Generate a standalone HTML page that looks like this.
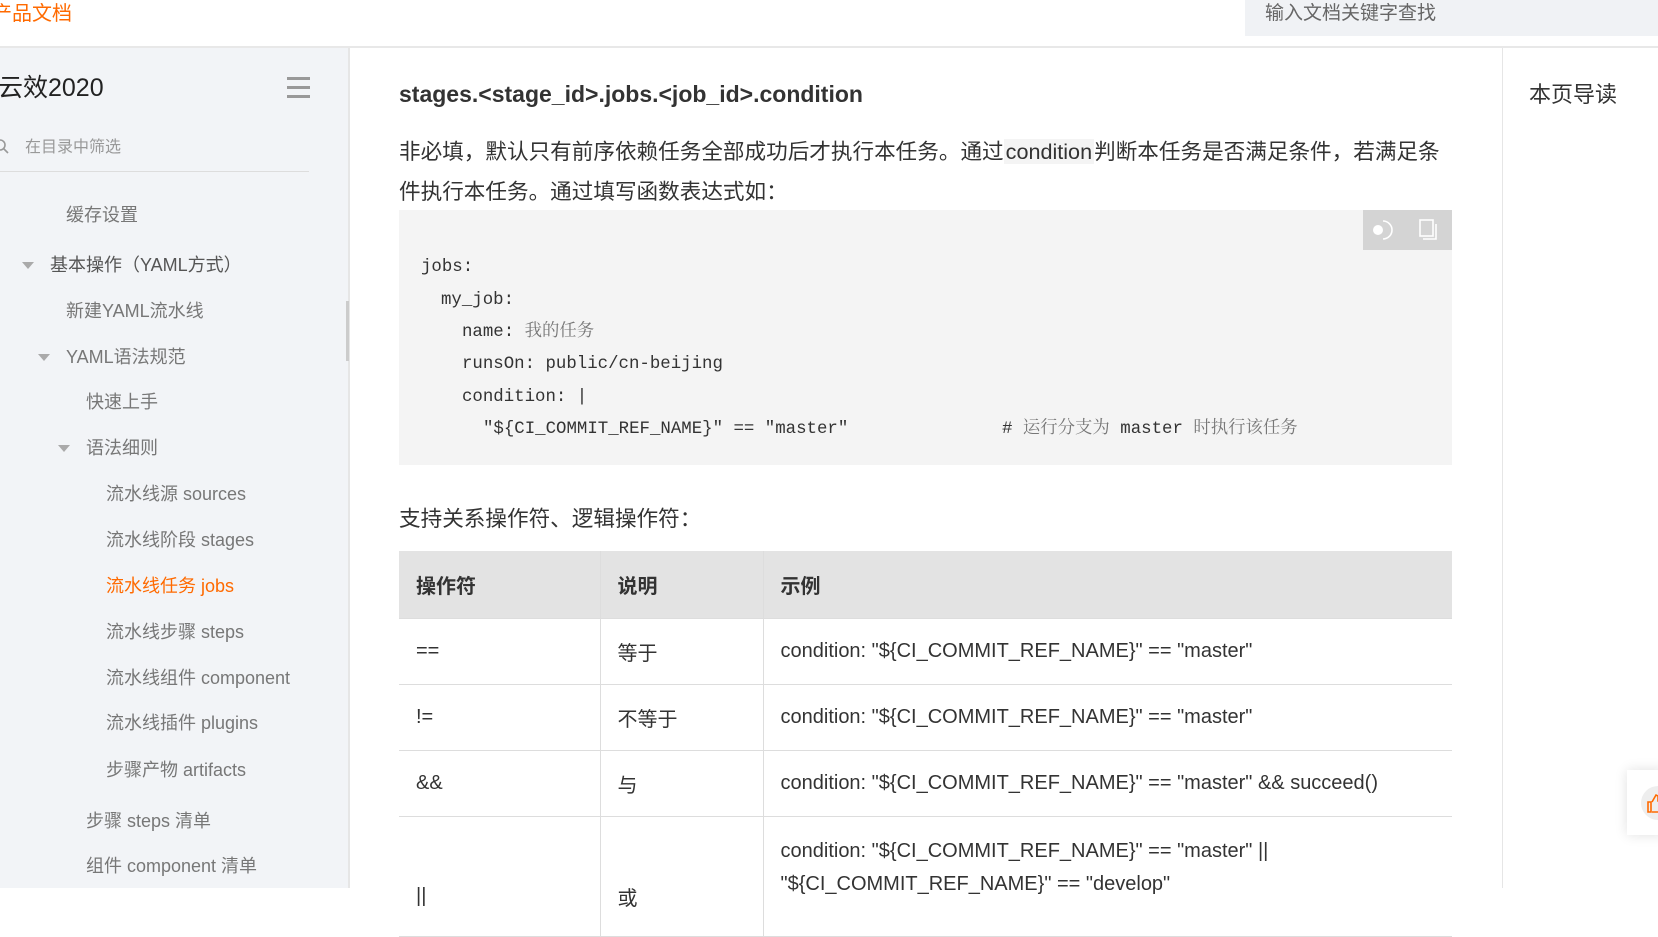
<!DOCTYPE html>
<html><head><meta charset="utf-8"><style>
*{margin:0;padding:0;box-sizing:border-box}
body{width:1658px;height:888px;overflow:hidden;background:#fff;position:relative;font-family:"Liberation Sans","Noto Sans CJK SC",sans-serif;color:#333}
.a{position:absolute;white-space:nowrap}
#side{position:absolute;left:0;top:48px;width:350px;height:840px;background:#f2f4f7;border-right:2px solid #e6e6e6}
.si{position:absolute;font-size:18px;color:#777;line-height:24px;white-space:nowrap}
.tri{position:absolute;width:0;height:0;border-left:6px solid transparent;border-right:6px solid transparent;border-top:7px solid #aaa}
.code{position:absolute;left:399px;top:210px;width:1053px;height:255px;background:#f4f4f4}
.cl{position:absolute;font-family:"Liberation Mono","Noto Serif CJK SC",monospace;font-size:17.4px;color:#333;white-space:pre;line-height:24px}
table{position:absolute;left:399px;top:551px;width:1053px;border-collapse:collapse;font-size:20px}
td,th{border-bottom:1px solid #ddd;text-align:left;padding-left:17px;vertical-align:middle}
th{background:#e3e3e3;height:67px;font-weight:bold}
td{height:66px}
td+td,th+th{border-left:1px solid #ddd}
</style></head><body>
<div class="a" style="left:-8px;top:-3px;font-size:20px;color:#ff6a00">产品文档</div>
<div class="a" style="left:1245px;top:0;width:413px;height:36px;background:#f0f2f5"></div>
<div class="a" style="left:1265px;top:-2px;font-size:19px;color:#666">输入文档关键字查找</div>
<div class="a" style="left:0;top:46px;width:1658px;height:2px;background:#e8e8e8"></div>

<div id="side">
<div class="si" style="left:-2px;top:24px;font-size:25px;color:#222;line-height:32px">云效2020</div>
<div style="position:absolute;left:287px;top:29px;width:23px;height:3px;background:#999"></div>
<div style="position:absolute;left:287px;top:38px;width:23px;height:3px;background:#999"></div>
<div style="position:absolute;left:287px;top:47px;width:23px;height:3px;background:#999"></div>
<svg style="position:absolute;left:-6px;top:91px" width="16" height="16"><circle cx="6" cy="6" r="5" fill="none" stroke="#999" stroke-width="1.6"/><line x1="10" y1="10" x2="14" y2="14" stroke="#999" stroke-width="1.6"/></svg>
<div class="si" style="left:25px;top:88px;font-size:16px;color:#999">在目录中筛选</div>
<div style="position:absolute;left:0;top:123px;width:309px;height:1px;background:#ddd"></div>
<div class="si" style="left:66px;top:155px">缓存设置</div>
<div class="tri" style="left:22px;top:214px"></div>
<div class="si" style="left:50px;top:205px;color:#555">基本操作（YAML方式）</div>
<div class="si" style="left:66px;top:251px">新建YAML流水线</div>
<div class="tri" style="left:38px;top:306px"></div>
<div class="si" style="left:66px;top:297px">YAML语法规范</div>
<div class="si" style="left:86px;top:342px">快速上手</div>
<div class="tri" style="left:58px;top:397px"></div>
<div class="si" style="left:86px;top:388px">语法细则</div>
<div class="si" style="left:106px;top:434px">流水线源 sources</div>
<div class="si" style="left:106px;top:480px">流水线阶段 stages</div>
<div class="si" style="left:106px;top:526px;color:#ff6a00">流水线任务 jobs</div>
<div class="si" style="left:106px;top:572px">流水线步骤 steps</div>
<div class="si" style="left:106px;top:618px">流水线组件 component</div>
<div class="si" style="left:106px;top:663px">流水线插件 plugins</div>
<div class="si" style="left:106px;top:710px">步骤产物 artifacts</div>
<div class="si" style="left:86px;top:761px">步骤 steps 清单</div>
<div class="si" style="left:86px;top:806px">组件 component 清单</div>
<div style="position:absolute;left:346px;top:253px;width:3px;height:60px;background:#ccc"></div>
</div>

<div class="a" style="left:399px;top:81px;font-size:23px;font-weight:bold;color:#333">stages.&lt;stage_id&gt;.jobs.&lt;job_id&gt;.condition</div>
<div class="a" style="left:399px;top:138px;font-size:21.6px;line-height:28px;color:#333">非必填，默认只有前序依赖任务全部成功后才执行本任务。通过<span style="background:#f4f4f4;padding:0 2px">condition</span>判断本任务是否满足条件，若满足条</div>
<div class="a" style="left:399px;top:178px;font-size:21.6px;line-height:28px;color:#333">件执行本任务。通过填写函数表达式如：</div>

<div class="code"></div>
<div class="a" style="left:1363px;top:210px;width:89px;height:40px;background:#d4d4d4"></div>
<svg class="a" style="left:1368px;top:216px" width="80" height="28"><circle cx="10" cy="14" r="5" fill="#fff"/><path d="M15 5 A9 9 0 1 1 15 23 A9 9 0 0 0 15 5" fill="none" stroke="#fff" stroke-width="1.6"/><rect x="52" y="4" width="13" height="16" fill="none" stroke="#fff" stroke-width="1.6"/><path d="M55 23 H68 V8" fill="none" stroke="#fff" stroke-width="1.6"/></svg>
<div class="cl" style="left:421px;top:256px">jobs:</div>
<div class="cl" style="left:441px;top:289px">my_job:</div>
<div class="cl" style="left:462px;top:321px">name: <span style="color:#777">我的任务</span></div>
<div class="cl" style="left:462px;top:353px">runsOn: public/cn-beijing</div>
<div class="cl" style="left:462px;top:386px">condition: |</div>
<div class="cl" style="left:483px;top:418px">"${CI_COMMIT_REF_NAME}" == "master"</div>
<div class="cl" style="left:1002px;top:418px">#<span style="color:#777"> 运行分支为 </span>master<span style="color:#777"> 时执行该任务</span></div>

<div class="a" style="left:399px;top:505px;font-size:21.6px;line-height:28px">支持关系操作符、逻辑操作符：</div>
<table>
<tr><th style="width:201px">操作符</th><th style="width:163px">说明</th><th>示例</th></tr>
<tr><td>==</td><td>等于</td><td>condition: "${CI_COMMIT_REF_NAME}" == "master"</td></tr>
<tr><td>!=</td><td>不等于</td><td>condition: "${CI_COMMIT_REF_NAME}" == "master"</td></tr>
<tr><td>&amp;&amp;</td><td>与</td><td>condition: "${CI_COMMIT_REF_NAME}" == "master" &amp;&amp; succeed()</td></tr>
<tr><td style="height:120px;padding-top:40px">||</td><td style="padding-top:40px">或</td><td style="vertical-align:top;padding-top:18px;line-height:33px">condition: "${CI_COMMIT_REF_NAME}" == "master" ||<br>"${CI_COMMIT_REF_NAME}" == "develop"</td></tr>
</table>

<div class="a" style="left:1502px;top:48px;width:1px;height:840px;background:#e6e6e6"></div>
<div class="a" style="left:1529px;top:77px;font-size:22px;color:#333">本页导读</div>
<div class="a" style="left:1627px;top:770px;width:40px;height:65px;background:#fff;box-shadow:0 0 12px rgba(0,0,0,.12)"></div>
<div class="a" style="left:1641px;top:786px;width:34px;height:34px;border-radius:50%;background:#eee"></div>
<svg class="a" style="left:1647px;top:793px" width="14" height="20"><path d="M1 9 H4 V19 H1 Z M5 9 L9 2 L11 3 V8 H14 V19 H5" fill="none" stroke="#ff6a00" stroke-width="1.6"/></svg>
</body></html>
